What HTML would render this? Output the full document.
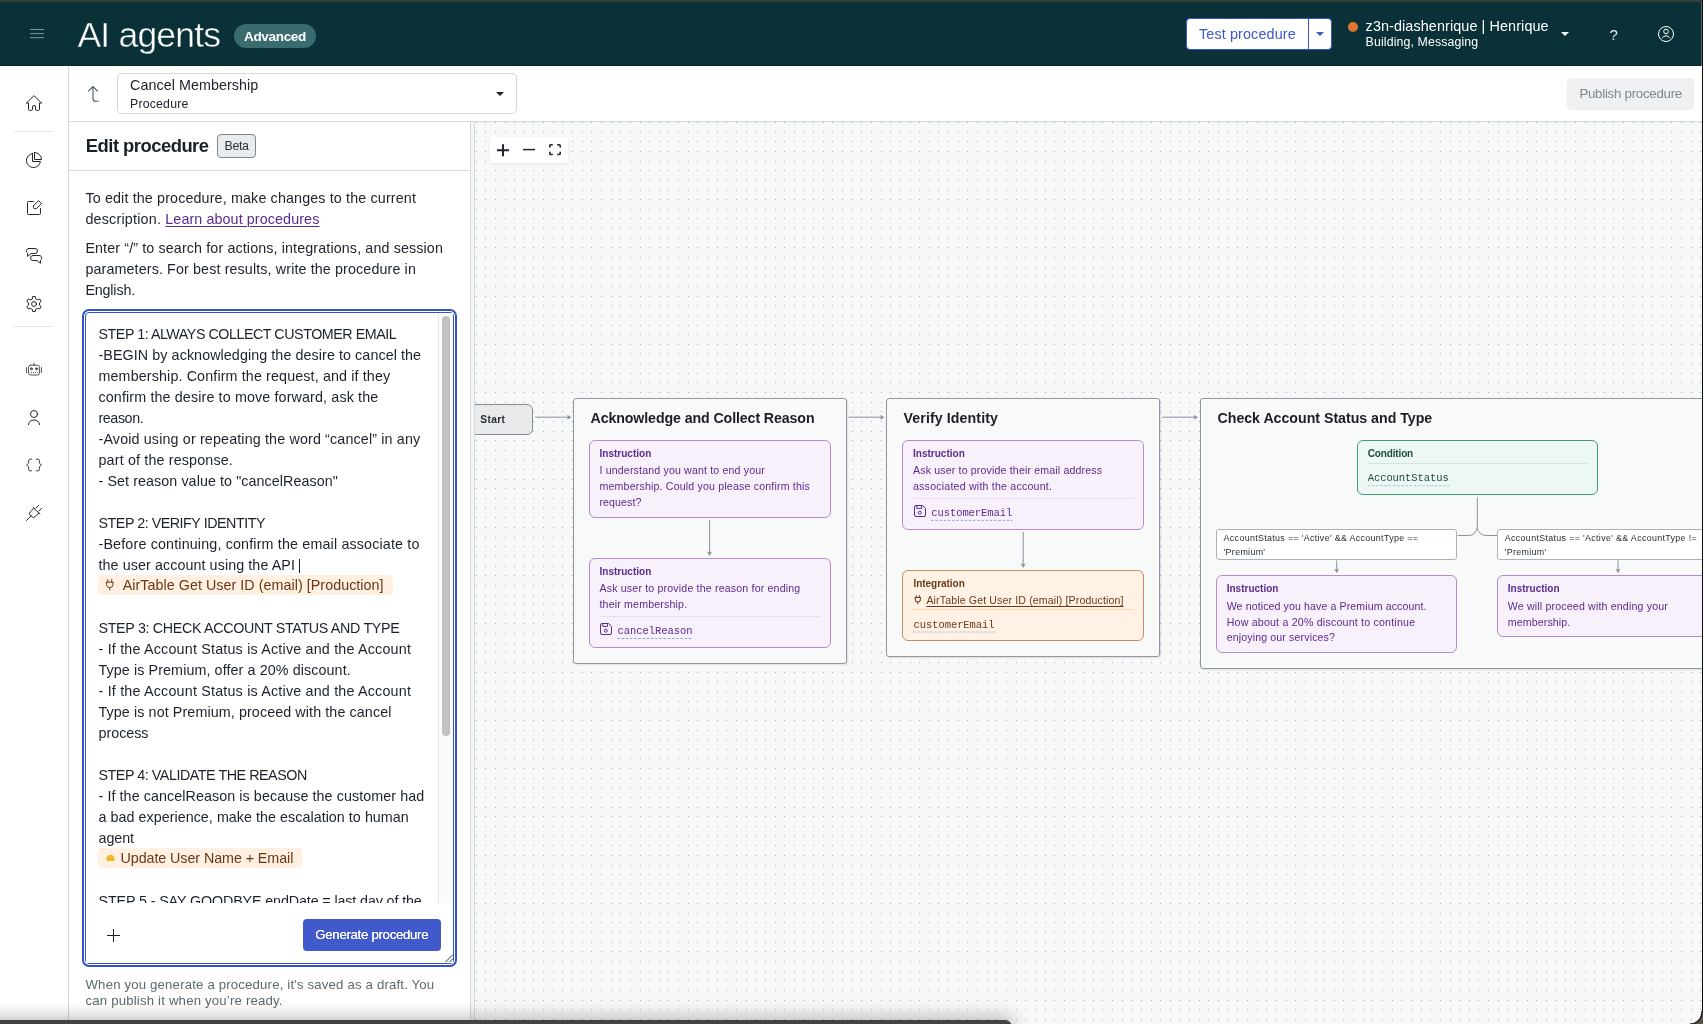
<!DOCTYPE html>
<html><head><meta charset="utf-8"><title>AI agents</title>
<style>
html,body{margin:0;padding:0}
body{width:1703px;height:1024px;overflow:hidden;position:relative;background:#fff;font-family:"Liberation Sans",sans-serif}
body *{position:absolute;box-sizing:border-box}
.t{white-space:pre;margin:0}
svg{overflow:visible}
</style></head><body>
<div style="left:0;top:0;width:1703px;height:1024px;will-change:transform">
<div style="left:475px;top:122px;width:1228px;height:902px;background:#f7f9f9;"></div>
<svg style="left:475px;top:122px" width="1228" height="902"><defs><pattern id="dots" width="135" height="135" patternUnits="userSpaceOnUse"><g fill="#a3a9b2"><rect x="1" y="0" width="1" height="1"/><rect x="10" y="0" width="1" height="1"/><rect x="20" y="0" width="1" height="1"/><rect x="30" y="0" width="1" height="1"/><rect x="39" y="0" width="1" height="1"/><rect x="49" y="0" width="1" height="1"/><rect x="58" y="0" width="1" height="1"/><rect x="68" y="0" width="1" height="1"/><rect x="78" y="0" width="1" height="1"/><rect x="87" y="0" width="1" height="1"/><rect x="97" y="0" width="1" height="1"/><rect x="107" y="0" width="1" height="1"/><rect x="116" y="0" width="1" height="1"/><rect x="126" y="0" width="1" height="1"/><rect x="1" y="10" width="1" height="1"/><rect x="10" y="10" width="1" height="1"/><rect x="20" y="10" width="1" height="1"/><rect x="30" y="10" width="1" height="1"/><rect x="39" y="10" width="1" height="1"/><rect x="49" y="10" width="1" height="1"/><rect x="58" y="10" width="1" height="1"/><rect x="68" y="10" width="1" height="1"/><rect x="78" y="10" width="1" height="1"/><rect x="87" y="10" width="1" height="1"/><rect x="97" y="10" width="1" height="1"/><rect x="107" y="10" width="1" height="1"/><rect x="116" y="10" width="1" height="1"/><rect x="126" y="10" width="1" height="1"/><rect x="1" y="19" width="1" height="1"/><rect x="10" y="19" width="1" height="1"/><rect x="20" y="19" width="1" height="1"/><rect x="30" y="19" width="1" height="1"/><rect x="39" y="19" width="1" height="1"/><rect x="49" y="19" width="1" height="1"/><rect x="58" y="19" width="1" height="1"/><rect x="68" y="19" width="1" height="1"/><rect x="78" y="19" width="1" height="1"/><rect x="87" y="19" width="1" height="1"/><rect x="97" y="19" width="1" height="1"/><rect x="107" y="19" width="1" height="1"/><rect x="116" y="19" width="1" height="1"/><rect x="126" y="19" width="1" height="1"/><rect x="1" y="29" width="1" height="1"/><rect x="10" y="29" width="1" height="1"/><rect x="20" y="29" width="1" height="1"/><rect x="30" y="29" width="1" height="1"/><rect x="39" y="29" width="1" height="1"/><rect x="49" y="29" width="1" height="1"/><rect x="58" y="29" width="1" height="1"/><rect x="68" y="29" width="1" height="1"/><rect x="78" y="29" width="1" height="1"/><rect x="87" y="29" width="1" height="1"/><rect x="97" y="29" width="1" height="1"/><rect x="107" y="29" width="1" height="1"/><rect x="116" y="29" width="1" height="1"/><rect x="126" y="29" width="1" height="1"/><rect x="1" y="39" width="1" height="1"/><rect x="10" y="39" width="1" height="1"/><rect x="20" y="39" width="1" height="1"/><rect x="30" y="39" width="1" height="1"/><rect x="39" y="39" width="1" height="1"/><rect x="49" y="39" width="1" height="1"/><rect x="58" y="39" width="1" height="1"/><rect x="68" y="39" width="1" height="1"/><rect x="78" y="39" width="1" height="1"/><rect x="87" y="39" width="1" height="1"/><rect x="97" y="39" width="1" height="1"/><rect x="107" y="39" width="1" height="1"/><rect x="116" y="39" width="1" height="1"/><rect x="126" y="39" width="1" height="1"/><rect x="1" y="48" width="1" height="1"/><rect x="10" y="48" width="1" height="1"/><rect x="20" y="48" width="1" height="1"/><rect x="30" y="48" width="1" height="1"/><rect x="39" y="48" width="1" height="1"/><rect x="49" y="48" width="1" height="1"/><rect x="58" y="48" width="1" height="1"/><rect x="68" y="48" width="1" height="1"/><rect x="78" y="48" width="1" height="1"/><rect x="87" y="48" width="1" height="1"/><rect x="97" y="48" width="1" height="1"/><rect x="107" y="48" width="1" height="1"/><rect x="116" y="48" width="1" height="1"/><rect x="126" y="48" width="1" height="1"/><rect x="1" y="58" width="1" height="1"/><rect x="10" y="58" width="1" height="1"/><rect x="20" y="58" width="1" height="1"/><rect x="30" y="58" width="1" height="1"/><rect x="39" y="58" width="1" height="1"/><rect x="49" y="58" width="1" height="1"/><rect x="58" y="58" width="1" height="1"/><rect x="68" y="58" width="1" height="1"/><rect x="78" y="58" width="1" height="1"/><rect x="87" y="58" width="1" height="1"/><rect x="97" y="58" width="1" height="1"/><rect x="107" y="58" width="1" height="1"/><rect x="116" y="58" width="1" height="1"/><rect x="126" y="58" width="1" height="1"/><rect x="1" y="68" width="1" height="1"/><rect x="10" y="68" width="1" height="1"/><rect x="20" y="68" width="1" height="1"/><rect x="30" y="68" width="1" height="1"/><rect x="39" y="68" width="1" height="1"/><rect x="49" y="68" width="1" height="1"/><rect x="58" y="68" width="1" height="1"/><rect x="68" y="68" width="1" height="1"/><rect x="78" y="68" width="1" height="1"/><rect x="87" y="68" width="1" height="1"/><rect x="97" y="68" width="1" height="1"/><rect x="107" y="68" width="1" height="1"/><rect x="116" y="68" width="1" height="1"/><rect x="126" y="68" width="1" height="1"/><rect x="1" y="77" width="1" height="1"/><rect x="10" y="77" width="1" height="1"/><rect x="20" y="77" width="1" height="1"/><rect x="30" y="77" width="1" height="1"/><rect x="39" y="77" width="1" height="1"/><rect x="49" y="77" width="1" height="1"/><rect x="58" y="77" width="1" height="1"/><rect x="68" y="77" width="1" height="1"/><rect x="78" y="77" width="1" height="1"/><rect x="87" y="77" width="1" height="1"/><rect x="97" y="77" width="1" height="1"/><rect x="107" y="77" width="1" height="1"/><rect x="116" y="77" width="1" height="1"/><rect x="126" y="77" width="1" height="1"/><rect x="1" y="87" width="1" height="1"/><rect x="10" y="87" width="1" height="1"/><rect x="20" y="87" width="1" height="1"/><rect x="30" y="87" width="1" height="1"/><rect x="39" y="87" width="1" height="1"/><rect x="49" y="87" width="1" height="1"/><rect x="58" y="87" width="1" height="1"/><rect x="68" y="87" width="1" height="1"/><rect x="78" y="87" width="1" height="1"/><rect x="87" y="87" width="1" height="1"/><rect x="97" y="87" width="1" height="1"/><rect x="107" y="87" width="1" height="1"/><rect x="116" y="87" width="1" height="1"/><rect x="126" y="87" width="1" height="1"/><rect x="1" y="96" width="1" height="1"/><rect x="10" y="96" width="1" height="1"/><rect x="20" y="96" width="1" height="1"/><rect x="30" y="96" width="1" height="1"/><rect x="39" y="96" width="1" height="1"/><rect x="49" y="96" width="1" height="1"/><rect x="58" y="96" width="1" height="1"/><rect x="68" y="96" width="1" height="1"/><rect x="78" y="96" width="1" height="1"/><rect x="87" y="96" width="1" height="1"/><rect x="97" y="96" width="1" height="1"/><rect x="107" y="96" width="1" height="1"/><rect x="116" y="96" width="1" height="1"/><rect x="126" y="96" width="1" height="1"/><rect x="1" y="106" width="1" height="1"/><rect x="10" y="106" width="1" height="1"/><rect x="20" y="106" width="1" height="1"/><rect x="30" y="106" width="1" height="1"/><rect x="39" y="106" width="1" height="1"/><rect x="49" y="106" width="1" height="1"/><rect x="58" y="106" width="1" height="1"/><rect x="68" y="106" width="1" height="1"/><rect x="78" y="106" width="1" height="1"/><rect x="87" y="106" width="1" height="1"/><rect x="97" y="106" width="1" height="1"/><rect x="107" y="106" width="1" height="1"/><rect x="116" y="106" width="1" height="1"/><rect x="126" y="106" width="1" height="1"/><rect x="1" y="116" width="1" height="1"/><rect x="10" y="116" width="1" height="1"/><rect x="20" y="116" width="1" height="1"/><rect x="30" y="116" width="1" height="1"/><rect x="39" y="116" width="1" height="1"/><rect x="49" y="116" width="1" height="1"/><rect x="58" y="116" width="1" height="1"/><rect x="68" y="116" width="1" height="1"/><rect x="78" y="116" width="1" height="1"/><rect x="87" y="116" width="1" height="1"/><rect x="97" y="116" width="1" height="1"/><rect x="107" y="116" width="1" height="1"/><rect x="116" y="116" width="1" height="1"/><rect x="126" y="116" width="1" height="1"/><rect x="1" y="125" width="1" height="1"/><rect x="10" y="125" width="1" height="1"/><rect x="20" y="125" width="1" height="1"/><rect x="30" y="125" width="1" height="1"/><rect x="39" y="125" width="1" height="1"/><rect x="49" y="125" width="1" height="1"/><rect x="58" y="125" width="1" height="1"/><rect x="68" y="125" width="1" height="1"/><rect x="78" y="125" width="1" height="1"/><rect x="87" y="125" width="1" height="1"/><rect x="97" y="125" width="1" height="1"/><rect x="107" y="125" width="1" height="1"/><rect x="116" y="125" width="1" height="1"/><rect x="126" y="125" width="1" height="1"/></g></pattern></defs><rect width="1228" height="902" fill="url(#dots)"/></svg>
<div style="left:490px;top:137px;width:78px;height:26px;background:#fff;box-shadow:0 1px 3px rgba(0,0,0,.08);"></div>
<svg style="left:490px;top:137px" width="78" height="26" viewBox="0 0 78 26" fill="none" stroke="#1f2733"><path d="M7 13.2H19M13 7.2V19.2" stroke-width="2"/><path d="M33 12.6H45" stroke-width="1.5"/><path d="M59.8 10.6V8.6a.8 .8 0 0 1 .8-.8H62.8M67.2 7.8H69.4a.8 .8 0 0 1 .8 .8V10.6M70.2 14.7V16.7a.8 .8 0 0 1-.8 .8H67.2M62.8 17.5H60.6a.8 .8 0 0 1-.8-.8V14.7" stroke-width="1.6"/></svg>
<div style="left:462px;top:404px;width:71px;height:30.5px;background:#e8eaec;border:1px solid #848e98;border-radius:6px;"></div>
<span class="t" style="left:480.30px;top:413.00px;line-height:14px;font-size:10.2px;letter-spacing:0.356px;color:#1f2733;font-weight:700;">Start</span>
<svg style="left:0;top:0" width="1703" height="1024" fill="none"><path d="M535 417.2H569.5" stroke="#87929d" stroke-width="1"/><path d="M571.5 417.2L567.0 414.7L568.0 417.2L567.0 419.7Z" fill="#87929d"/></svg>
<div style="left:573px;top:398px;width:273.5px;height:265.5px;background:#f8f9f9;border:1px solid #8e98a2;border-radius:3px;box-shadow:1px 1px 2px rgba(0,0,0,.10);"></div>
<span class="t" style="left:590.50px;top:409.00px;line-height:19px;font-size:14.2px;letter-spacing:-0.102px;color:#1a1f26;font-weight:700;">Acknowledge and Collect Reason</span>
<div style="left:589px;top:440px;width:241.5px;height:77.5px;background:#f8f0fa;border:1px solid #b58ad0;border-radius:6px;"></div>
<span class="t" style="left:599.50px;top:447.00px;line-height:13px;font-size:10px;letter-spacing:0.012px;color:#5a2b90;font-weight:700;">Instruction</span>
<span class="t" style="left:599.50px;top:463.00px;line-height:14px;font-size:10.6px;letter-spacing:0.161px;color:#5a2b90;">I understand you want to end your</span>
<span class="t" style="left:599.50px;top:479.00px;line-height:14px;font-size:10.6px;letter-spacing:0.179px;color:#5a2b90;">membership. Could you please confirm this</span>
<span class="t" style="left:599.50px;top:495.00px;line-height:14px;font-size:10.6px;letter-spacing:0.083px;color:#5a2b90;">request?</span>
<svg style="left:0;top:0" width="1703" height="1024" fill="none"><path d="M709.6 520V554" stroke="#87929d" stroke-width="1"/><path d="M709.6 556L707.1 551.5L709.6 552.5L712.1 551.5Z" fill="#87929d"/></svg>
<div style="left:589px;top:558px;width:241.5px;height:89.5px;background:#f8f0fa;border:1px solid #b58ad0;border-radius:6px;"></div>
<span class="t" style="left:599.50px;top:565.00px;line-height:13px;font-size:10px;letter-spacing:0.012px;color:#5a2b90;font-weight:700;">Instruction</span>
<span class="t" style="left:599.50px;top:581.00px;line-height:14px;font-size:10.6px;letter-spacing:0.174px;color:#5a2b90;">Ask user to provide the reason for ending</span>
<span class="t" style="left:599.50px;top:597.00px;line-height:14px;font-size:10.6px;letter-spacing:0.178px;color:#5a2b90;">their membership.</span>
<div style="left:599.5px;top:615.5px;width:220.5px;height:1px;background:#ebdcf2;"></div>
<svg style="left:600px;top:623.3px" width="12" height="12" viewBox="0 0 12 12" fill="none" stroke="#5a2b90" stroke-width="1"><path d="M2 .5H8.6L11.5 3.4V10a1.5 1.5 0 0 1-1.5 1.5H2A1.5 1.5 0 0 1 .5 10V2A1.5 1.5 0 0 1 2 .5Z"/><path d="M2.8 .6V3.4H7.6V.6"/><circle cx="5.8" cy="7.7" r="1.5"/></svg>
<span class="t" style="left:617.60px;top:624.00px;line-height:14px;font-size:10.5px;letter-spacing:-0.069px;color:#5a2b90;font-family:'Liberation Mono', monospace;">cancelReason</span>
<svg style="left:0;top:0" width="1703" height="1024" fill="none"><path d="M617.3 638.5H693" stroke="#8ea6ea" stroke-width="1" stroke-dasharray="2.6 1.6"/></svg>
<svg style="left:0;top:0" width="1703" height="1024" fill="none"><path d="M848.5 417.2H882.5" stroke="#87929d" stroke-width="1"/><path d="M884.5 417.2L880.0 414.7L881.0 417.2L880.0 419.7Z" fill="#87929d"/></svg>
<div style="left:886px;top:398px;width:274px;height:259px;background:#f8f9f9;border:1px solid #8e98a2;border-radius:3px;box-shadow:1px 1px 2px rgba(0,0,0,.10);"></div>
<span class="t" style="left:903.50px;top:409.00px;line-height:19px;font-size:14.2px;letter-spacing:0.097px;color:#1a1f26;font-weight:700;">Verify Identity</span>
<div style="left:902.4px;top:440px;width:241.5px;height:89.5px;background:#f8f0fa;border:1px solid #b58ad0;border-radius:6px;"></div>
<span class="t" style="left:913.00px;top:447.00px;line-height:13px;font-size:10px;letter-spacing:0.012px;color:#5a2b90;font-weight:700;">Instruction</span>
<span class="t" style="left:913.00px;top:463.00px;line-height:14px;font-size:10.6px;letter-spacing:0.156px;color:#5a2b90;">Ask user to provide their email address</span>
<span class="t" style="left:913.00px;top:479.00px;line-height:14px;font-size:10.6px;letter-spacing:0.215px;color:#5a2b90;">associated with the account.</span>
<div style="left:913px;top:497.5px;width:220.5px;height:1px;background:#ebdcf2;"></div>
<svg style="left:913.5px;top:505.3px" width="12" height="12" viewBox="0 0 12 12" fill="none" stroke="#5a2b90" stroke-width="1"><path d="M2 .5H8.6L11.5 3.4V10a1.5 1.5 0 0 1-1.5 1.5H2A1.5 1.5 0 0 1 .5 10V2A1.5 1.5 0 0 1 2 .5Z"/><path d="M2.8 .6V3.4H7.6V.6"/><circle cx="5.8" cy="7.7" r="1.5"/></svg>
<span class="t" style="left:931.20px;top:506.00px;line-height:14px;font-size:10.5px;letter-spacing:-0.063px;color:#5a2b90;font-family:'Liberation Mono', monospace;">customerEmail</span>
<svg style="left:0;top:0" width="1703" height="1024" fill="none"><path d="M931 520.4H1012.6" stroke="#8ea6ea" stroke-width="1" stroke-dasharray="2.6 1.6"/></svg>
<svg style="left:0;top:0" width="1703" height="1024" fill="none"><path d="M1023.2 532V566" stroke="#87929d" stroke-width="1"/><path d="M1023.2 568L1020.7 563.5L1023.2 564.5L1025.7 563.5Z" fill="#87929d"/></svg>
<div style="left:902.4px;top:570px;width:241.5px;height:71px;background:#fff1e3;border:1px solid #c98d62;border-radius:6px;"></div>
<span class="t" style="left:913.40px;top:577.00px;line-height:13px;font-size:10px;letter-spacing:-0.025px;color:#6b3a1a;font-weight:700;">Integration</span>
<svg style="left:914.3px;top:594.6px" width="7.65" height="9.35" viewBox="0 0 9 11" fill="none" stroke="#6b3a1a" stroke-width="1.18"><path d="M2.7 .3V3M6.3 .3V3M.8 3H8.2M1.5 3V5.2a3 3 0 0 0 6 0V3M4.5 8.2V10.8"/></svg>
<span class="t" style="left:926.40px;top:593.00px;line-height:14px;font-size:10.6px;letter-spacing:0.128px;color:#6b3a1a;text-decoration:underline;text-decoration-thickness:1px;text-underline-offset:1.5px;">AirTable Get User ID (email) [Production]</span>
<div style="left:913px;top:609.3px;width:220.5px;height:1px;background:#ffd6ad;"></div>
<span class="t" style="left:913.60px;top:618.00px;line-height:14px;font-size:10.5px;letter-spacing:-0.079px;color:#6b3a1a;font-family:'Liberation Mono', monospace;">customerEmail</span>
<svg style="left:0;top:0" width="1703" height="1024" fill="none"><path d="M913 632H995" stroke="#b3baea" stroke-width="1" stroke-dasharray="2.6 1.6"/></svg>
<svg style="left:0;top:0" width="1703" height="1024" fill="none"><path d="M1162.3 417.2H1196" stroke="#87929d" stroke-width="1"/><path d="M1198 417.2L1193.5 414.7L1194.5 417.2L1193.5 419.7Z" fill="#87929d"/></svg>
<div style="left:1200px;top:398px;width:520px;height:271px;background:#f8f9f9;border:1px solid #8e98a2;border-radius:3px;box-shadow:1px 1px 2px rgba(0,0,0,.10);"></div>
<span class="t" style="left:1217.50px;top:409.00px;line-height:19px;font-size:14.2px;letter-spacing:-0.018px;color:#1a1f26;font-weight:700;">Check Account Status and Type</span>
<div style="left:1357px;top:440px;width:241px;height:55px;background:#edf8f4;border:1px solid #3f9c7c;border-radius:6px;"></div>
<span class="t" style="left:1367.70px;top:447.00px;line-height:13px;font-size:10px;letter-spacing:-0.140px;color:#1c4a3c;font-weight:700;">Condition</span>
<div style="left:1367.7px;top:463px;width:219.89999999999986px;height:1px;background:#cfe6dd;"></div>
<span class="t" style="left:1367.70px;top:471.00px;line-height:14px;font-size:10.5px;letter-spacing:-0.071px;color:#1c4a3c;font-family:'Liberation Mono', monospace;">AccountStatus</span>
<svg style="left:0;top:0" width="1703" height="1024" fill="none"><path d="M1367.5 485.7H1449.5" stroke="#b3baea" stroke-width="1" stroke-dasharray="2.6 1.6"/></svg>
<svg style="left:0;top:0" width="1703" height="1024" fill="none" stroke="#87929d" stroke-width="1"><path d="M1477.3 497.3V527a8.5 8.5 0 0 1-8.5 8.5H1457.5M1477.3 527a8.5 8.5 0 0 0 8.5 8.5H1497.5"/></svg>
<div style="left:1216px;top:529px;width:241px;height:31px;background:#fff;border:1px solid #a9b1b9;border-radius:3px;"></div>
<span class="t" style="left:1223.60px;top:532.00px;line-height:12px;font-size:8.9px;letter-spacing:0.330px;color:#1f2733;">AccountStatus == 'Active' &amp;&amp; AccountType ==</span>
<span class="t" style="left:1223.60px;top:546.00px;line-height:12px;font-size:8.9px;letter-spacing:0.322px;color:#1f2733;">'Premium'</span>
<div style="left:1497px;top:529px;width:241.5px;height:31px;background:#fff;border:1px solid #a9b1b9;border-radius:3px;"></div>
<span class="t" style="left:1504.80px;top:532.00px;line-height:12px;font-size:8.9px;letter-spacing:0.335px;color:#1f2733;">AccountStatus == 'Active' &amp;&amp; AccountType !=</span>
<span class="t" style="left:1504.80px;top:546.00px;line-height:12px;font-size:8.9px;letter-spacing:0.322px;color:#1f2733;">'Premium'</span>
<svg style="left:0;top:0" width="1703" height="1024" fill="none"><path d="M1336.7 560.5V571.2" stroke="#87929d" stroke-width="1"/><path d="M1336.7 573.2L1334.2 568.7L1336.7 569.7L1339.2 568.7Z" fill="#87929d"/></svg>
<svg style="left:0;top:0" width="1703" height="1024" fill="none"><path d="M1618 560.5V571.2" stroke="#87929d" stroke-width="1"/><path d="M1618 573.2L1615.5 568.7L1618 569.7L1620.5 568.7Z" fill="#87929d"/></svg>
<div style="left:1216px;top:575px;width:241px;height:78px;background:#f8f0fa;border:1px solid #b58ad0;border-radius:6px;"></div>
<span class="t" style="left:1226.70px;top:582.00px;line-height:13px;font-size:10px;letter-spacing:0.012px;color:#5a2b90;font-weight:700;">Instruction</span>
<span class="t" style="left:1226.70px;top:599.00px;line-height:14px;font-size:10.6px;letter-spacing:0.105px;color:#5a2b90;">We noticed you have a Premium account.</span>
<span class="t" style="left:1226.70px;top:615.00px;line-height:14px;font-size:10.6px;letter-spacing:0.216px;color:#5a2b90;">How about a 20% discount to continue</span>
<span class="t" style="left:1226.70px;top:630.00px;line-height:14px;font-size:10.6px;letter-spacing:0.136px;color:#5a2b90;">enjoying our services?</span>
<div style="left:1497px;top:575px;width:241.5px;height:62px;background:#f8f0fa;border:1px solid #b58ad0;border-radius:6px;"></div>
<span class="t" style="left:1507.80px;top:582.00px;line-height:13px;font-size:10px;letter-spacing:0.012px;color:#5a2b90;font-weight:700;">Instruction</span>
<span class="t" style="left:1507.80px;top:599.00px;line-height:14px;font-size:10.6px;letter-spacing:0.173px;color:#5a2b90;">We will proceed with ending your</span>
<span class="t" style="left:1507.80px;top:615.00px;line-height:14px;font-size:10.6px;letter-spacing:0.124px;color:#5a2b90;">membership.</span>
<div style="left:470px;top:122px;width:5px;height:902px;background:#f5f7f7;border-left:1px solid #d3d9dd;border-right:1px solid #d3d9dd;"></div>
<div style="left:69px;top:122px;width:401px;height:902px;background:#fff;"></div>
<span class="t" style="left:85.80px;top:134.00px;line-height:24px;font-size:18.4px;letter-spacing:-0.506px;color:#1a2029;font-weight:700;">Edit procedure</span>
<div style="left:217px;top:134px;width:39px;height:24px;background:#e9ebed;border:1px solid #7b8791;border-radius:4px;"></div>
<span class="t" style="left:224.50px;top:138.00px;line-height:17px;font-size:12.4px;letter-spacing:-0.375px;color:#293239;">Beta</span>
<div style="left:69px;top:170px;width:401px;height:1px;background:#d8dcde;"></div>
<span class="t" style="left:85.40px;top:189.00px;line-height:19px;font-size:14.3px;letter-spacing:0.143px;color:#20262f;">To edit the procedure, make changes to the current</span>
<span class="t" style="left:85.40px;top:210.00px;line-height:19px;font-size:14.3px;letter-spacing:0.216px;color:#20262f;">description. </span>
<span class="t" style="left:165.30px;top:210.00px;line-height:19px;font-size:14.3px;letter-spacing:0.103px;color:#5b2a91;text-decoration:underline;text-decoration-thickness:1px;text-underline-offset:1.5px;">Learn about procedures</span>
<span class="t" style="left:85.40px;top:239.00px;line-height:19px;font-size:14.3px;letter-spacing:0.123px;color:#20262f;">Enter “/” to search for actions, integrations, and session</span>
<span class="t" style="left:85.40px;top:260.00px;line-height:19px;font-size:14.3px;letter-spacing:0.123px;color:#20262f;">parameters. For best results, write the procedure in</span>
<span class="t" style="left:85.40px;top:281.00px;line-height:19px;font-size:14.3px;letter-spacing:-0.159px;color:#20262f;">English.</span>
<div style="left:85px;top:312px;width:369px;height:652px;background:#fff;border:1px solid #3353c8;border-radius:4px;box-shadow:0 0 0 1px #fff,0 0 0 3px #3353c8;"></div>
<span class="t" style="left:98.50px;top:325.00px;line-height:19px;font-size:14.3px;letter-spacing:-0.472px;color:#1c222c;">STEP 1: ALWAYS COLLECT CUSTOMER EMAIL</span>
<span class="t" style="left:98.50px;top:346.00px;line-height:19px;font-size:14.3px;letter-spacing:0.082px;color:#1c222c;">-BEGIN by acknowledging the desire to cancel the</span>
<span class="t" style="left:98.50px;top:367.00px;line-height:19px;font-size:14.3px;letter-spacing:0.130px;color:#1c222c;">membership. Confirm the request, and if they</span>
<span class="t" style="left:98.50px;top:388.00px;line-height:19px;font-size:14.3px;letter-spacing:0.132px;color:#1c222c;">confirm the desire to move forward, ask the</span>
<span class="t" style="left:98.50px;top:409.00px;line-height:19px;font-size:14.3px;letter-spacing:-0.427px;color:#1c222c;">reason.</span>
<span class="t" style="left:98.50px;top:430.00px;line-height:19px;font-size:14.3px;letter-spacing:0.147px;color:#1c222c;">-Avoid using or repeating the word “cancel” in any</span>
<span class="t" style="left:98.50px;top:451.00px;line-height:19px;font-size:14.3px;letter-spacing:0.160px;color:#1c222c;">part of the response.</span>
<span class="t" style="left:98.50px;top:472.00px;line-height:19px;font-size:14.3px;letter-spacing:0.079px;color:#1c222c;">- Set reason value to "cancelReason"</span>
<span class="t" style="left:98.50px;top:514.00px;line-height:19px;font-size:14.3px;letter-spacing:-0.476px;color:#1c222c;">STEP 2: VERIFY IDENTITY</span>
<span class="t" style="left:98.50px;top:535.00px;line-height:19px;font-size:14.3px;letter-spacing:0.160px;color:#1c222c;">-Before continuing, confirm the email associate to</span>
<span class="t" style="left:98.50px;top:556.00px;line-height:19px;font-size:14.3px;letter-spacing:0.085px;color:#1c222c;">the user account using the API</span>
<span class="t" style="left:98.50px;top:619.00px;line-height:19px;font-size:14.3px;letter-spacing:-0.335px;color:#1c222c;">STEP 3: CHECK ACCOUNT STATUS AND TYPE</span>
<span class="t" style="left:98.50px;top:640.00px;line-height:19px;font-size:14.3px;letter-spacing:0.200px;color:#1c222c;">- If the Account Status is Active and the Account</span>
<span class="t" style="left:98.50px;top:661.00px;line-height:19px;font-size:14.3px;letter-spacing:0.101px;color:#1c222c;">Type is Premium, offer a 20% discount.</span>
<span class="t" style="left:98.50px;top:682.00px;line-height:19px;font-size:14.3px;letter-spacing:0.200px;color:#1c222c;">- If the Account Status is Active and the Account</span>
<span class="t" style="left:98.50px;top:703.00px;line-height:19px;font-size:14.3px;letter-spacing:0.103px;color:#1c222c;">Type is not Premium, proceed with the cancel</span>
<span class="t" style="left:98.50px;top:724.00px;line-height:19px;font-size:14.3px;letter-spacing:-0.009px;color:#1c222c;">process</span>
<span class="t" style="left:98.50px;top:766.00px;line-height:19px;font-size:14.3px;letter-spacing:-0.456px;color:#1c222c;">STEP 4: VALIDATE THE REASON</span>
<span class="t" style="left:98.50px;top:787.00px;line-height:19px;font-size:14.3px;letter-spacing:0.080px;color:#1c222c;">- If the cancelReason is because the customer had</span>
<span class="t" style="left:98.50px;top:808.00px;line-height:19px;font-size:14.3px;letter-spacing:0.042px;color:#1c222c;">a bad experience, make the escalation to human</span>
<span class="t" style="left:98.50px;top:829.00px;line-height:19px;font-size:14.3px;letter-spacing:-0.056px;color:#1c222c;">agent</span>
<span class="t" style="left:98.50px;top:892.00px;line-height:19px;font-size:14.3px;letter-spacing:-0.118px;color:#1c222c;">STEP 5 - SAY GOODBYE endDate = last day of the</span>
<div style="left:299.3px;top:558.5px;width:1px;height:14.5px;background:#1c222c;"></div>
<div style="left:98px;top:575px;width:295px;height:20px;background:#fff0e1;border-radius:4px;"></div>
<svg style="left:105.3px;top:579.2px" width="9.54" height="11.66" viewBox="0 0 9 11" fill="none" stroke="#703a18" stroke-width="0.94"><path d="M2.7 .3V3M6.3 .3V3M.8 3H8.2M1.5 3V5.2a3 3 0 0 0 6 0V3M4.5 8.2V10.8"/></svg>
<span class="t" style="left:122.70px;top:576.00px;line-height:19px;font-size:14.3px;letter-spacing:0.046px;color:#6b3715;">AirTable Get User ID (email) [Production]</span>
<div style="left:98px;top:848px;width:204px;height:20px;background:#fff0e1;border-radius:4px;"></div>
<svg style="left:106px;top:854px" width="9" height="8" viewBox="0 0 9 8"><path d="M.3 5.2A4.1 4.4 0 0 1 8.6 5.2V5.8A1.2 1.2 0 0 1 7.4 7H1.5A1.2 1.2 0 0 1 .3 5.8Z" fill="#efb92f"/></svg>
<span class="t" style="left:120.50px;top:849.00px;line-height:19px;font-size:14.3px;letter-spacing:-0.068px;color:#6b3715;">Update User Name + Email</span>
<div style="left:438px;top:313px;width:15px;height:590px;background:#fafafa;border-left:1px solid #e6e6e6;"></div>
<div style="left:442px;top:316px;width:8px;height:420px;background:#c1c1c1;border-radius:4px;"></div>
<div style="left:86px;top:903px;width:367px;height:60px;background:#fff;"></div>
<svg style="left:106px;top:929px" width="14" height="14" viewBox="0 0 14 14" fill="none" stroke="#1c222c" stroke-width="1"><path d="M1 6.5H14M7.5 0V13"/></svg>
<div style="left:303px;top:919px;width:138px;height:32px;background:#4059cb;border-radius:4px;"></div>
<span class="t" style="left:315.30px;top:926.00px;line-height:18px;font-size:13.2px;letter-spacing:-0.280px;color:#fff;text-shadow:0 0 .4px #fff;">Generate procedure</span>
<svg style="left:441.5px;top:951.3px" width="12" height="12" viewBox="0 0 12 12" fill="none" stroke="#333" stroke-width="1"><path d="M11 3.5L3.5 11M11 7.5L7.5 11"/></svg>
<span class="t" style="left:85.50px;top:976.00px;line-height:18px;font-size:13.2px;letter-spacing:0.173px;color:#5c6970;">When you generate a procedure, it's saved as a draft. You</span>
<span class="t" style="left:85.50px;top:992.00px;line-height:18px;font-size:13.2px;letter-spacing:0.185px;color:#5c6970;">can publish it when you’re ready.</span>
<div style="left:69px;top:66px;width:1634px;height:56px;background:#fff;border-bottom:1px solid #d3d9dd;"></div>
<svg style="left:85px;top:84px" width="18" height="20" viewBox="0 0 18 20" fill="none" stroke="#4d5766" stroke-width="1.1"><path d="M3.2 7.4L8 2.6L12.8 7.4M8 2.8V14.5Q8 17.3 10.8 17.3H13.6"/></svg>
<div style="left:117px;top:73px;width:400px;height:41px;background:#fff;border:1px solid #d3d9dd;border-radius:5px;"></div>
<span class="t" style="left:130.00px;top:76.00px;line-height:19px;font-size:14.3px;letter-spacing:0.068px;color:#20262f;">Cancel Membership</span>
<span class="t" style="left:130.00px;top:96.00px;line-height:16px;font-size:12.3px;letter-spacing:0.194px;color:#20262f;">Procedure</span>
<svg style="left:496px;top:92px" width="8" height="4" viewBox="0 0 8 4"><path d="M0 0H8L4 4Z" fill="#1f2326"/></svg>
<div style="left:1567px;top:78px;width:127px;height:32px;background:#eef0f2;border-radius:4px;"></div>
<span class="t" style="left:1579.40px;top:85.00px;line-height:18px;font-size:13.3px;letter-spacing:-0.270px;color:#7f8993;">Publish procedure</span>
<div style="left:0px;top:66px;width:69px;height:958px;background:#fff;border-right:1px solid #d3d9dd;"></div>
<div style="left:14px;top:131px;width:38px;height:1px;background:#e3e6e8;"></div>
<div style="left:14px;top:326px;width:38px;height:1px;background:#e3e6e8;"></div>
<svg style="left:26px;top:95px" width="16" height="16" viewBox="0 0 16 16" fill="none" stroke="#23282d" stroke-width="1" stroke-linecap="round" stroke-linejoin="round"><path d="M.6 8L8 .6L15.4 8M.6 8H2.5V14.4a1 1 0 0 0 1 1H5.5a1 1 0 0 0 1-1V12a1.5 1.5 0 0 1 3 0V14.4a1 1 0 0 0 1 1H12.5a1 1 0 0 0 1-1V8H15.4"/></svg>
<svg style="left:26px;top:152px" width="16" height="16" viewBox="0 0 16 16" fill="none" stroke="#23282d" stroke-width="1" stroke-linecap="round" stroke-linejoin="round"><path d="M6.5 1.6V9.5H14.4A7 7 0 1 1 6.5 1.6Z"/><path d="M8.5 .5V7.5H15.5A7 7 0 0 0 8.5 .5Z"/></svg>
<svg style="left:26px;top:200px" width="16" height="16" viewBox="0 0 16 16" fill="none" stroke="#23282d" stroke-width="1" stroke-linecap="round" stroke-linejoin="round"><path d="M7.3 1.5H2.5a1 1 0 0 0-1 1V13.5a1 1 0 0 0 1 1H13.5a1 1 0 0 0 1-1V8.5"/><path d="M7.6 5.6L12.6 .6L15.6 3.6L10.4 8.6H8.4A.9 .9 0 0 1 7.5 7.7Z"/></svg>
<svg style="left:26px;top:248px" width="16" height="16" viewBox="0 0 16 16" fill="none" stroke="#23282d" stroke-width="1" stroke-linecap="round" stroke-linejoin="round"><path d="M3 .5H9A2.5 2.5 0 0 1 9 5.5H5L1.6 8.4V5.2A2.5 2.5 0 0 1 3 .5Z"/><path d="M7 7.5H13A2.5 2.5 0 0 1 14.4 12.2V15.4L11 12.5H7A2.5 2.5 0 0 1 7 7.5Z"/></svg>
<svg style="left:26px;top:296px" width="16" height="16" viewBox="0 0 16 16" fill="none" stroke="#23282d" stroke-width="1" stroke-linecap="round" stroke-linejoin="round"><path d="M6.27 2.67 L6.65 0.52 L9.35 0.52 L9.73 2.67 L11.75 3.84 L13.80 3.09 L15.15 5.43 L13.48 6.84 L13.48 9.16 L15.15 10.57 L13.80 12.91 L11.75 12.16 L9.73 13.33 L9.35 15.48 L6.65 15.48 L6.27 13.33 L4.25 12.16 L2.20 12.91 L0.85 10.57 L2.52 9.16 L2.52 6.84 L0.85 5.43 L2.20 3.09 L4.25 3.84Z" stroke-linejoin="round"/><circle cx="8" cy="8" r="2.4"/></svg>
<svg style="left:26px;top:361px" width="16" height="16" viewBox="0 0 16 16" fill="none" stroke="#4c5258" stroke-width="1" stroke-linecap="round" stroke-linejoin="round"><rect x="2.6" y="4.2" width="10.8" height="9.8" rx="2"/><path d="M8 2.2V4.2M.6 6.5V11.6M15.4 6.5V11.6"/><circle cx="5.5" cy="7.8" r="1" fill="#4c5258"/><circle cx="10.5" cy="7.8" r="1" fill="#4c5258"/><path d="M5 11.5H11.6" stroke-dasharray="1 1" stroke-linecap="butt"/></svg>
<svg style="left:26px;top:410px" width="16" height="16" viewBox="0 0 16 16" fill="none" stroke="#23282d" stroke-width="1" stroke-linecap="round" stroke-linejoin="round"><circle cx="8" cy="4" r="3.5"/><path d="M2.4 14.6A5.7 5.7 0 0 1 13.6 14.6"/></svg>
<svg style="left:26px;top:457px" width="16" height="16" viewBox="0 0 16 16" fill="none" stroke="#3a4046" stroke-width="1" stroke-linecap="round" stroke-linejoin="round"><path d="M5.6 2.2H4.2Q2.6 2.2 2.6 3.8V6.2L.6 8L2.6 9.8V12.2Q2.6 13.8 4.2 13.8H5.6M10.4 2.2H11.8Q13.4 2.2 13.4 3.8V6.2L15.4 8L13.4 9.8V12.2Q13.4 13.8 11.8 13.8H10.4"/></svg>
<svg style="left:26px;top:505px" width="16" height="16" viewBox="0 0 16 16" fill="none" stroke="#23282d" stroke-width="1" stroke-linecap="round" stroke-linejoin="round"><path d="M.5 15.5L5.2 10.8M7 2.2L13.8 9M8 3.2L4.3 6.9a2.4 2.4 0 0 0 0 3.4L5.7 11.7a2.4 2.4 0 0 0 3.4 0L12.8 8M10 3L12.6 .4M13 6L15.6 3.4"/></svg>
<div style="left:0px;top:0px;width:1703px;height:66px;background:#0a3038;"></div>
<div style="left:0px;top:0px;width:1703px;height:2px;background:#3b3b3b;"></div>
<div style="left:0px;top:65px;width:1703px;height:1px;background:#07272d;"></div>
<svg style="left:30px;top:29px" width="14" height="10" viewBox="0 0 14 10" fill="none" stroke="#7f979c" stroke-width="1"><path d="M0 .5H14M0 4.6H14M0 8.7H14"/></svg>
<span class="t" style="left:77.50px;top:12.00px;line-height:47px;font-size:35.5px;letter-spacing:-0.811px;color:#fff;-webkit-text-stroke:0.45px #0a3038;">AI agents</span>
<div style="left:234px;top:24px;width:82px;height:24px;background:#3a6b6e;border-radius:12px;"></div>
<span class="t" style="left:244.00px;top:28.00px;line-height:18px;font-size:13.5px;letter-spacing:-0.316px;color:#fff;font-weight:700;">Advanced</span>
<div style="left:1186px;top:18px;width:146px;height:32px;background:#fff;border:1px solid #3a55c6;border-radius:4px;"></div>
<div style="left:1308px;top:18px;width:1px;height:32px;background:#3a55c6;"></div>
<span class="t" style="left:1199.00px;top:25.00px;line-height:19px;font-size:14.4px;letter-spacing:0.114px;color:#3f58c8;">Test procedure</span>
<svg style="left:1316px;top:32px" width="8" height="4" viewBox="0 0 8 4"><path d="M0 0H8L4 4Z" fill="#3f58c8"/></svg>
<div style="left:1348px;top:22px;width:10px;height:10px;background:#e0762f;border-radius:5px;"></div>
<span class="t" style="left:1365.60px;top:17.00px;line-height:19px;font-size:14.4px;letter-spacing:0.095px;color:#fff;">z3n-diashenrique | Henrique</span>
<span class="t" style="left:1365.60px;top:34.00px;line-height:16px;font-size:12.3px;letter-spacing:0.139px;color:#fff;">Building, Messaging</span>
<svg style="left:1561px;top:32px" width="8" height="4" viewBox="0 0 8 4"><path d="M0 0H8L4 4Z" fill="#fff"/></svg>
<span class="t" style="left:1609.60px;top:25.00px;line-height:20px;font-size:15px;letter-spacing:0.000px;color:#e8eeef;">?</span>
<svg style="left:1658px;top:26px" width="16" height="16" viewBox="0 0 16 16" fill="none" stroke="#fff" stroke-width="1"><circle cx="8" cy="8" r="7.5"/><circle cx="8" cy="5.4" r="2.3"/><path d="M4.2 12.2A4.2 4.2 0 0 1 11.8 12.2"/></svg>
<div style="left:1701px;top:2px;width:1px;height:64px;background:#49696e;"></div>
<div style="left:1702px;top:0px;width:1px;height:1024px;background:#0b0b0b;"></div>
<div style="left:-20px;top:1019.5px;width:1032px;height:10px;background:#414345;border-top-right-radius:7px;box-shadow:0 0 18px 1px rgba(0,0,0,.38);"></div>
<svg style="left:1690px;top:1011px" width="13" height="13" viewBox="0 0 13 13"><path d="M13 0V13H0A12 12 0 0 0 12 0Z" fill="#5a5445"/><path d="M0 13A12 12 0 0 0 12 0" fill="none" stroke="#1c1c1c" stroke-width="1.5"/></svg>
</div>
</body></html>
